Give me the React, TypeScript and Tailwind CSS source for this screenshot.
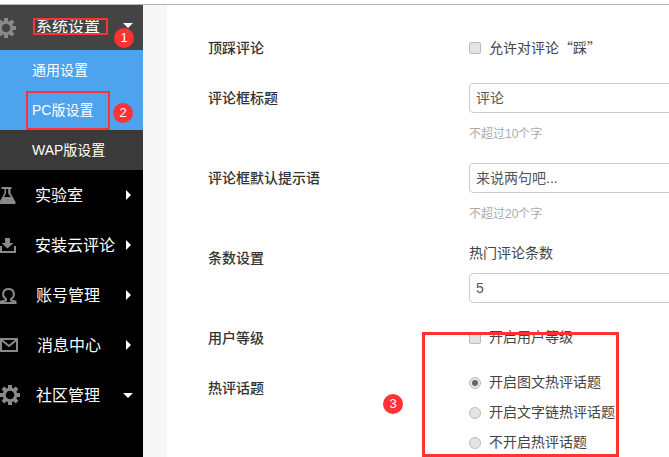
import React from 'react'

const font = "font-['Liberation_Sans','Noto_Sans_CJK_SC',sans-serif]"
const cjk = "font-['Noto_Sans_CJK_SC',sans-serif] [text-spacing-trim:space-all]"

const teeth = [0, 45, 90, 135, 180, 225, 270, 315]

const GearIcon = () => (
  <svg width="20" height="20" viewBox="-10 -10 20 20" fill="#8a8a8a">
    {teeth.map((a) => (
      <rect key={a} x="-2" y="-10" width="4" height="5" transform={`rotate(${a})`} />
    ))}
    <circle r="5.800" fill="none" stroke="#8a8a8a" strokeWidth="3" />
  </svg>
)

const FlaskIcon = () => (
  <svg width="16" height="17" viewBox="0 0 16 17" fill="#8a8a8a">
    <path fillRule="evenodd" d="M2 0h10v2h-1v4l5 9c.4 1-.2 2-1.200 2H1.200C.2 17-.4 16 0 15l5-9V2H2zM6.500 2v4.500L4.500 10h7L8.700 6.500V2z" transform="translate(-.5 0)" />
  </svg>
)

const DownloadIcon = () => (
  <svg width="16" height="15" viewBox="0 0 16 15" fill="#8a8a8a">
    <path d="M5 0h5v5h3.500L7.500 10.500 1.500 5H5z" />
    <path d="M0 8h2v5h12V8h2v7H0z" />
  </svg>
)

const AccountIcon = () => (
  <svg width="17" height="16" viewBox="0 0 17 16" fill="none" stroke="#8a8a8a" strokeWidth="2" className="mt-[2px]">
    <path d="M6 11C3.500 9.500 2.800 7.500 3.200 5.200 3.700 2.500 6 1 8.500 1s4.800 1.500 5.300 4.200c.4 2.300-.3 4.300-2.800 5.800v1.500l4.500 1V15H1v-1.500l5-1z" />
  </svg>
)

const MailIcon = () => (
  <svg width="18" height="14" viewBox="0 0 18 14" fill="none" stroke="#8a8a8a" strokeWidth="2">
    <rect x="1" y="1" width="16" height="12" />
    <path d="M1 1.500l8 6.500 8-6.500" />
  </svg>
)

const CaretDown = () => (
  <span className="block h-0 w-0 border-x-[5px] border-t-[5px] border-x-transparent border-t-white" />
)

const CaretRight = () => (
  <span className="block h-0 w-0 border-y-[5px] border-l-[5px] border-y-transparent border-l-white" />
)

const Badge = ({ n, className }: { n: number; className: string }) => (
  <div className={`absolute flex h-5 w-5 items-center justify-center rounded-full bg-[#f33] text-[13px] text-white ${className}`}>
    {n}
  </div>
)

const menu = [
  { name: '实验室', icon: <FlaskIcon />, ml: 'ml-[15px]' },
  { name: '安装云评论', icon: <DownloadIcon />, ml: 'ml-[15px]' },
  { name: '账号管理', icon: <AccountIcon />, ml: 'ml-[16px]' },
  { name: '消息中心', icon: <MailIcon />, ml: 'ml-[17px]' },
  { name: '社区管理', icon: <GearIcon />, ml: 'ml-[16px]', open: true },
]

const Sidebar = () => (
  <div className="flex w-[143px] shrink-0 flex-col bg-black text-white">
    <div className="flex h-[45px] shrink-0 items-center bg-[#444] pr-[10px]">
      <div className="-ml-[4px] w-[20px] shrink-0">
        <GearIcon />
      </div>
      <span className="ml-[20px] flex-1 pb-[2px] text-base">系统设置</span>
      <div className="pb-[4px]"><CaretDown /></div>
    </div>
    <div className="flex h-[40px] shrink-0 items-center bg-[#4ea3ee] pl-[32px] text-sm">通用设置</div>
    <div className="flex h-[40px] shrink-0 items-center bg-[#4ea3ee] pl-[32px] text-sm">PC版设置</div>
    <div className="flex h-[40px] shrink-0 items-center bg-[#3a3a3a] pl-[32px] text-sm">WAP版设置</div>
    {menu.map((m) => (
      <div key={m.name} className={`flex h-[50px] shrink-0 items-center ${m.open ? 'pr-[10px]' : 'pr-[12px]'}`}>
        <div className="flex w-[20px] shrink-0">{m.icon}</div>
        <span className={`${m.ml} flex-1 whitespace-nowrap pt-[2px] text-base`}>{m.name}</span>
        {m.open ? <CaretDown /> : <CaretRight />}
      </div>
    ))}
  </div>
)

const Label = ({ children }: { children: React.ReactNode }) => (
  <div className="w-[261px] shrink-0 text-sm font-medium text-[#333]">{children}</div>
)

const Check = () => (
  <span className="h-3 w-3 shrink-0 rounded-[2px] border border-[#bbb] bg-[#e4e4e4]" />
)

const Radio = ({ on }: { on?: boolean }) => (
  <span className="flex h-3 w-3 shrink-0 items-center justify-center rounded-full border border-[#bbb] bg-[#e4e4e4]">
    {on && <span className="h-[6px] w-[6px] rounded-full bg-[#666]" />}
  </span>
)

const Field = ({ value }: { value: string }) => (
  <div className="flex h-[30px] w-[300px] shrink-0 items-center rounded-[4px] border border-[#ccc] px-[6px] text-sm text-[#555]">
    {value}
  </div>
)

const Option = ({ text, on }: { text: string; on?: boolean }) => (
  <div className="flex h-[20px] items-center">
    <Radio on={on} />
    <span className="ml-2 whitespace-nowrap pb-[2px]">{text}</span>
  </div>
)

const Main = () => (
  <div className="flex-1 overflow-hidden bg-white pl-[41px] text-sm text-[#444]">
    <div className="mt-[33px] flex h-[20px] items-center">
      <Label>顶踩评论</Label>
      <Check />
      <span className="ml-2 whitespace-nowrap pb-[2px]">
        允许对评论<span className={cjk}>“</span>踩<span className={cjk}>”</span>
      </span>
    </div>
    <div className="mt-[25px] flex h-[30px] items-center">
      <Label>评论框标题</Label>
      <Field value="评论" />
    </div>
    <div className="ml-[261px] mt-[10px] h-[20px] text-xs leading-[22px] text-[#aaa]">不超过10个字</div>
    <div className="mt-[20px] flex h-[30px] items-center">
      <Label>评论框默认提示语</Label>
      <Field value="来说两句吧..." />
    </div>
    <div className="ml-[261px] mt-[10px] h-[20px] text-xs leading-[22px] text-[#aaa]">不超过20个字</div>
    <div className="mt-[20px] flex">
      <div className="pt-[5px]"><Label>条数设置</Label></div>
      <div>
        <div className="mb-[10px] h-[20px] whitespace-nowrap leading-[20px]">热门评论条数</div>
        <Field value="5" />
      </div>
    </div>
    <div className="mt-[25px] flex h-[20px] items-center">
      <Label>用户等级</Label>
      <Check />
      <span className="ml-2 whitespace-nowrap pb-[2px]">开启用户等级</span>
    </div>
    <div className="mt-[25px] flex">
      <div className="mt-[5px]"><Label>热评话题</Label></div>
      <div className="flex flex-col gap-[10px]">
        <Option text="开启图文热评话题" on />
        <Option text="开启文字链热评话题" />
        <Option text="不开启热评话题" />
      </div>
    </div>
  </div>
)

export default function App() {
  return (
    <div className={`relative h-[457px] w-[669px] overflow-hidden bg-white ${font}`}>
      <div className="h-[4px] bg-white" />
      <div className="h-px bg-[#b5b5b5]" />
      <div className="flex h-[452px]">
        <Sidebar />
        <div className="w-[24px] shrink-0 bg-[#f6f6f6]" />
        <Main />
      </div>
      {/* annotations drawn over the screenshot */}
      <div className="absolute left-[33px] top-[18px] h-[17px] w-[75px] border-2 border-[#f33]" />
      <div className="absolute left-[26px] top-[91px] h-[39px] w-[84px] border-2 border-[#f33]" />
      <div className="absolute left-[422px] top-[332px] h-[125px] w-[197px] border-[3px] border-[#f33]" />
      <Badge n={1} className="left-[114px] top-[28px]" />
      <Badge n={2} className="left-[113px] top-[103px]" />
      <Badge n={3} className="left-[383px] top-[394px]" />
    </div>
  )
}
